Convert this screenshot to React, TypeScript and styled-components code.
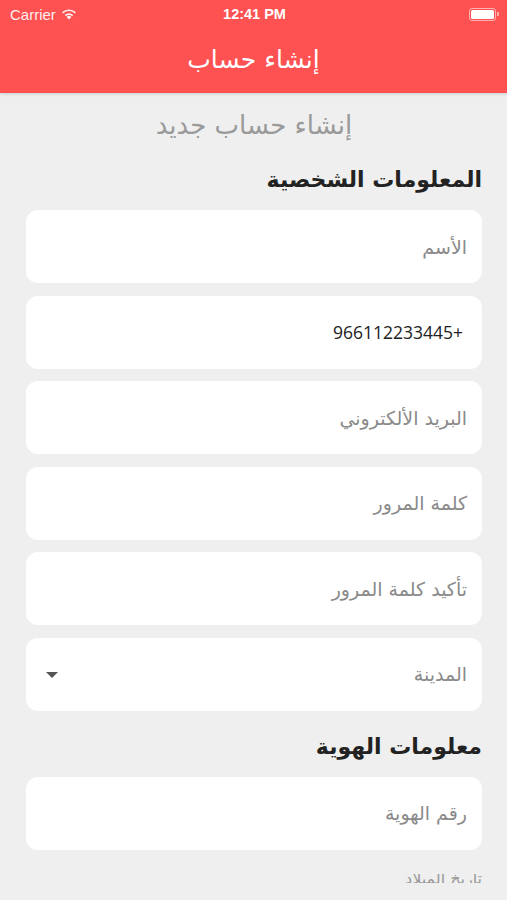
import styled, { createGlobalStyle } from 'styled-components'

const GlobalStyle = createGlobalStyle`
  html, body {
    margin: 0;
    padding: 0;
    background: #efefef;
  }
  body {
    font-family: "DejaVu Sans", "Noto Sans", sans-serif;
    overflow: hidden;
  }
`

const Screen = styled.div`
  width: 507px;
  height: 900px;
  overflow: hidden;
  background: #efefef;
  display: flex;
  flex-direction: column;
`

const Header = styled.header`
  background: #fd5152;
  height: 93px;
  display: flex;
  flex-direction: column;
  box-shadow: 0 1px 3px rgba(0, 0, 0, 0.15);
`

const StatusBar = styled.div`
  height: 28px;
  display: grid;
  grid-template-columns: 1fr auto 1fr;
  align-items: center;
  padding: 0 8px 0 10px;
  color: #fff;
  font-family: "Liberation Sans", Arial, sans-serif;
  font-size: 15px;
`

const Carrier = styled.div`
  display: flex;
  align-items: center;
  gap: 5px;
  opacity: 0.9;
`

const Clock = styled.div`
  font-weight: bold;
  font-size: 14.5px;
`

const Battery = styled.div`
  justify-self: end;
  display: flex;
  align-items: center;
  gap: 1px;
`

const BatteryBody = styled.div`
  width: 23px;
  height: 9px;
  border: 1.5px solid rgba(255, 255, 255, 0.55);
  border-radius: 3px;
  padding: 1px;
  box-sizing: content-box;
  &::after {
    content: '';
    display: block;
    width: 100%;
    height: 100%;
    background: #fff;
    border-radius: 1.5px;
  }
`

const BatteryTip = styled.div`
  width: 2px;
  height: 4px;
  background: rgba(255, 255, 255, 0.55);
  border-radius: 0 1px 1px 0;
`

const NavTitle = styled.h1`
  flex: 1;
  margin: 0;
  display: flex;
  align-items: center;
  justify-content: center;
  color: #fff;
  font-size: 25px;
  font-weight: normal;
  padding-bottom: 2px;
`

const Content = styled.main`
  direction: rtl;
  padding: 0 25px 0 26px;
  display: flex;
  flex-direction: column;
`

const Subtitle = styled.h2`
  margin: 12px 0 0;
  line-height: 40px;
  text-align: center;
  color: #9a9a9a;
  font-size: 26px;
  font-weight: normal;
`

const SectionTitle = styled.h3<{ $top: number }>`
  margin: ${p => p.$top}px 0 15px;
  line-height: 30px;
  color: #222;
  font-size: 22px;
  font-weight: 600;
`

const Fields = styled.div`
  display: flex;
  flex-direction: column;
  gap: 12.6px;
`

const Field = styled.div`
  height: 73px;
  background: #fff;
  border-radius: 12px;
  display: flex;
  align-items: center;
  justify-content: space-between;
  padding: 0 15px 0 20px;
`

const FieldText = styled.span<{ $filled?: boolean }>`
  font-size: ${p => (p.$filled ? '17.5px' : '19px')};
  color: ${p => (p.$filled ? '#222' : '#8a8a8a')};
  direction: ${p => (p.$filled ? 'ltr' : 'rtl')};
  margin-right: ${p => (p.$filled ? '4px' : '0')};
  font-family: ${p => (p.$filled ? '"Open Sans", "DejaVu Sans", sans-serif' : 'inherit')};
`

const Caret = styled.span`
  width: 0;
  height: 0;
  border-left: 6px solid transparent;
  border-right: 6px solid transparent;
  border-top: 6px solid #555;
  margin-top: 2px;
`

const ClippedLabel = styled.div`
  margin-top: 24px;
  height: 9px;
  overflow: hidden;
  color: #999;
  font-size: 16px;
  line-height: 22px;
  & > span {
    display: block;
    margin-top: -6px;
  }
`

const Wifi = () => (
  <svg width="16" height="12" viewBox="0 0 16 12">
    <path d="M8 11.5 L5.6 8.9 A3.4 3.4 0 0 1 10.4 8.9 Z" fill="#fff" />
    <path d="M3.7 7 A6.1 6.1 0 0 1 12.3 7 L11.1 8.2 A4.4 4.4 0 0 0 4.9 8.2 Z" fill="#fff" />
    <path d="M1 4.3 A9.9 9.9 0 0 1 15 4.3 L13.8 5.5 A8.2 8.2 0 0 0 2.2 5.5 Z" fill="#fff" />
  </svg>
)

const personal = [
  { text: 'الأسم' },
  { text: '966112233445+', filled: true },
  { text: 'البريد الألكتروني' },
  { text: 'كلمة المرور' },
  { text: 'تأكيد كلمة المرور' },
  { text: 'المدينة', select: true },
]

export default function App() {
  return (
    <>
      <GlobalStyle />
      <Screen>
        <Header>
          <StatusBar>
            <Carrier>
              Carrier
              <Wifi />
            </Carrier>
            <Clock>12:41 PM</Clock>
            <Battery>
              <BatteryBody />
              <BatteryTip />
            </Battery>
          </StatusBar>
          <NavTitle>إنشاء حساب</NavTitle>
        </Header>
        <Content>
          <Subtitle>إنشاء حساب جديد</Subtitle>
          <SectionTitle $top={20}>المعلومات الشخصية</SectionTitle>
          <Fields>
            {personal.map(f => (
              <Field key={f.text}>
                <FieldText $filled={f.filled}>{f.text}</FieldText>
                {f.select && <Caret />}
              </Field>
            ))}
          </Fields>
          <SectionTitle $top={21}>معلومات الهوية</SectionTitle>
          <Fields>
            <Field>
              <FieldText>رقم الهوية</FieldText>
            </Field>
          </Fields>
          <ClippedLabel>
            <span>تاريخ الميلاد</span>
          </ClippedLabel>
        </Content>
      </Screen>
    </>
  )
}
